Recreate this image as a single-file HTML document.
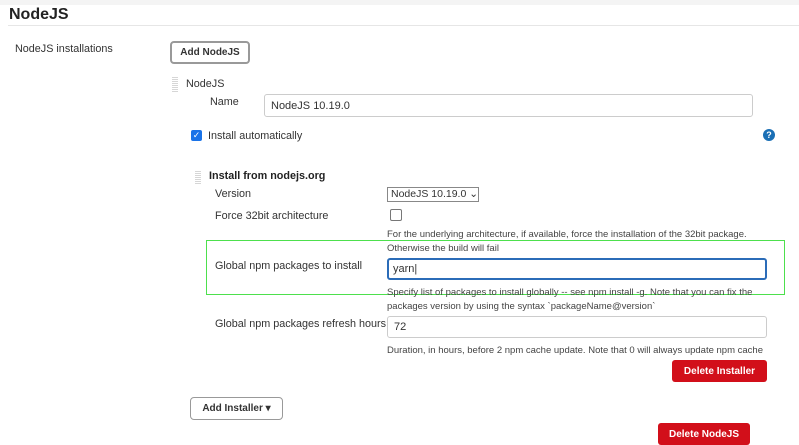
<!DOCTYPE html><html><head><style>
body{margin:0;width:799px;height:444px;overflow:hidden;background:#fff;font-family:"Liberation Sans",sans-serif;color:#333;position:relative}
.a{position:absolute;white-space:nowrap}
.l{font-size:10.8px;color:#333}
.h{font-size:9.5px;color:#444}
.inp{position:absolute;border:1px solid #ccc;border-radius:3px;box-sizing:border-box;font-size:11px;padding-left:6px;display:flex;align-items:center;background:#fff}
.btn{position:absolute;border:2px solid #999;border-radius:4px;box-sizing:border-box;font-size:10px;font-weight:bold;display:flex;align-items:center;justify-content:center;color:#333;background:#fff}
.del{position:absolute;background:#d20f1a;color:#fff;border-radius:3px;font-size:10px;font-weight:bold;display:flex;align-items:center;justify-content:center}
.grip{position:absolute;width:6px;background:repeating-linear-gradient(0deg,#ccc 0 1px,#fff 1px 2px),#fff;opacity:.8}
</style></head><body>
<div class="a" style="left:0;top:0;width:799px;height:5px;background:#f4f4f4"></div>
<div class="a" style="left:9px;top:6px;font-size:16px;font-weight:bold;color:#222">NodeJS</div>
<div class="a" style="left:8px;top:25px;width:791px;height:1px;background:#e6e6e6"></div>
<div class="a l" style="left:15px;top:43px">NodeJS installations</div>
<div class="btn" style="left:170px;top:41px;width:80px;height:23px">Add NodeJS</div>
<div class="grip" style="left:172px;top:77px;height:15px"></div>
<div class="a l" style="left:186px;top:78px">NodeJS</div>
<div class="a l" style="left:210px;top:96px">Name</div>
<div class="inp" style="left:264px;top:94px;width:489px;height:23px">NodeJS 10.19.0</div>
<div class="a" style="left:191px;top:130px;width:11px;height:11px;background:#1a73e8;border-radius:2px;color:#fff;font-size:9px;line-height:11px;text-align:center">✓</div>
<div class="a l" style="left:208px;top:130px">Install automatically</div>
<div class="a" style="left:763px;top:129px;width:12px;height:12px;background:#1a6fb5;border-radius:50%;color:#fff;font-size:9px;font-weight:bold;line-height:12px;text-align:center">?</div>
<div class="grip" style="left:195px;top:170px;height:14px"></div>
<div class="a l" style="left:209px;top:170px;font-weight:bold;color:#222">Install from nodejs.org</div>
<div class="a l" style="left:215px;top:188px">Version</div>
<div class="a" style="left:387px;top:187px;width:92px;height:15px;border:1px solid #888;box-sizing:border-box;font-size:10.5px;line-height:13px;padding-left:3px">NodeJS 10.19.0 ⌄</div>
<div class="a l" style="left:215px;top:210px">Force 32bit architecture</div>
<div class="a" style="left:390px;top:209px;width:10px;height:10px;border:1px solid #777;border-radius:2px"></div>
<div class="a h" style="left:387px;top:229px">For the underlying architecture, if available, force the installation of the 32bit package.</div>
<div class="a h" style="left:387px;top:243px">Otherwise the build will fail</div>
<div class="a" style="left:206px;top:240px;width:579px;height:55px;border:1px solid #4de04d;box-sizing:border-box"></div>
<div class="a l" style="left:215px;top:260px">Global npm packages to install</div>
<div class="inp" style="left:387px;top:258px;width:380px;height:22px;border:2px solid #2b6cb8;padding-left:4px">yarn|</div>
<div class="a h" style="left:387px;top:287px">Specify list of packages to install globally -- see npm install -g. Note that you can fix the</div>
<div class="a h" style="left:387px;top:301px">packages version by using the syntax `packageName@version`</div>
<div class="a l" style="left:215px;top:318px">Global npm packages refresh hours</div>
<div class="inp" style="left:387px;top:316px;width:380px;height:22px">72</div>
<div class="a h" style="left:387px;top:345px">Duration, in hours, before 2 npm cache update. Note that 0 will always update npm cache</div>
<div class="del" style="left:672px;top:360px;width:95px;height:22px">Delete Installer</div>
<div class="btn" style="left:190px;top:397px;width:93px;height:23px;border-width:1px">Add Installer ▾</div>
<div class="del" style="left:658px;top:423px;width:92px;height:22px">Delete NodeJS</div>
</body></html>
